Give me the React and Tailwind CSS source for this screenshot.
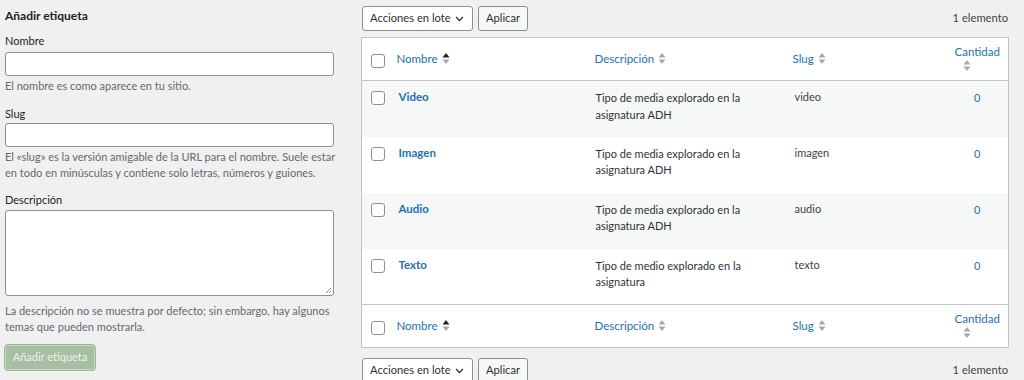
import React from "react";

const font = { fontFamily: 'Lato, "Noto Sans", Arial, sans-serif' };

function SortIcon({ active }) {
  return (
    <svg width="8" height="11" viewBox="0 0 8 11" className="inline-block ml-[4px] align-[-1px]">
      <path d="M4 0 L7.5 4.5 L0.5 4.5 Z" fill={active ? "#1d2327" : "#a7aaad"} />
      <path d="M0.5 6.5 L7.5 6.5 L4 11 Z" fill="#a7aaad" />
    </svg>
  );
}

function Checkbox({ block }) {
  return (
    <span
      className={
        (block ? "block " : "inline-block align-middle ") +
        "w-[14px] h-[14px] rounded-[3px] border border-[#8c8f94] bg-white"
      }
    />
  );
}

function Toolbar() {
  return (
    <div className="flex items-center h-[25px]">
      <div className="flex items-center justify-between whitespace-nowrap w-[111px] h-[25px] border border-[#8c8f94] rounded-[3px] bg-white pl-[7px] pr-[8px] text-[11.2px] text-[#2c3338]">
        <span>Acciones en lote</span>
        <svg width="9" height="6" viewBox="0 0 9 6"><path d="M1 1 L4.5 4.5 L8 1" fill="none" stroke="#2c3338" strokeWidth="1.3" /></svg>
      </div>
      <div className="ml-[5px] flex items-center justify-center w-[50px] h-[25px] border border-[#8c8f94] rounded-[3px] bg-[#f6f7f7] text-[11.2px] text-[#2c3338]">Aplicar</div>
      <div className="ml-auto text-[11.2px] text-[#3c434a]">1 elemento</div>
    </div>
  );
}

function HeaderRow({ bottom }) {
  return (
    <tr className={bottom ? "border-t border-[#c3c4c7]" : "border-b border-[#c3c4c7]"}>
      <td className="h-[43px] pl-[9px] align-middle"><Checkbox /></td>
      <td className="align-middle pl-0 text-[11.5px] text-[#2271b1]">Nombre<SortIcon active /></td>
      <td className="align-middle text-[11.5px] text-[#2271b1]">Descripción<SortIcon /></td>
      <td className="align-middle text-[11.5px] text-[#2271b1]">Slug<SortIcon /></td>
      <td className="align-middle text-[11.5px] text-[#2271b1] pl-[8px] leading-[14px]">
        <div>Cantidad</div>
        <div className="pl-[4px]"><SortIcon /></div>
      </td>
    </tr>
  );
}

const rows = [
  { name: "Video", desc: ["Tipo de media explorado en la", "asignatura ADH"], slug: "video" },
  { name: "Imagen", desc: ["Tipo de media explorado en la", "asignatura ADH"], slug: "imagen" },
  { name: "Audio", desc: ["Tipo de media explorado en la", "asignatura ADH"], slug: "audio" },
  { name: "Texto", desc: ["Tipo de medio explorado en la", "asignatura"], slug: "texto" },
];

export default function App() {
  return (
    <div style={font} className="w-[1024px] h-[380px] overflow-hidden bg-[#f0f0f1] flex text-[#3c434a]">
      <div className="w-[361px] shrink-0 pl-[5px] pr-[26px]">
        <div className="mt-[7px] text-[12px] font-bold text-[#1d2327] leading-[18px]">Añadir etiqueta</div>
        <div className="mt-[8px] text-[11px] text-[#1d2327] leading-[16px]">Nombre</div>
        <div className="mt-[3px] h-[24px] w-[329px] bg-white border border-[#8c8f94] rounded-[3px]" />
        <div className="mt-[2px] text-[11px] text-[#646970] leading-[16px]">El nombre es como aparece en tu sitio.</div>
        <div className="mt-[12px] text-[11px] text-[#1d2327] leading-[16px]">Slug</div>
        <div className="mt-[1px] h-[24px] w-[329px] bg-white border border-[#8c8f94] rounded-[3px]" />
        <div className="mt-[2px] text-[11px] text-[#646970] leading-[16px]">
          El «slug» es la versión amigable de la URL para el nombre. Suele estar en todo en minúsculas y contiene solo letras, números y guiones.
        </div>
        <div className="mt-[11px] text-[11px] text-[#1d2327] leading-[16px]">Descripción</div>
        <div className="relative mt-[2px] h-[86px] w-[329px] bg-white border border-[#8c8f94] rounded-[3px]">
          <svg className="absolute right-[1px] bottom-[1px]" width="7" height="7" viewBox="0 0 7 7">
            <path d="M6 1 L1 6 M6 4 L4 6" stroke="#8c8f94" strokeWidth="1" />
          </svg>
        </div>
        <div className="mt-[7px] text-[11px] text-[#646970] leading-[16px]">
          La descripción no se muestra por defecto; sin embargo, hay algunos temas que pueden mostrarla.
        </div>
        <div className="mt-[9px] ml-[-1px] inline-flex items-center justify-center w-[92px] h-[27px] rounded-[4px] border border-[#9fb899] bg-[#a7bfa2] shadow-[inset_0_0_0_1px_#c9d8c5] text-[11px] text-[#eef3ec]">
          Añadir etiqueta
        </div>
      </div>

      <div className="w-[647px] shrink-0 pt-[6px]">
        <div className="pl-[1px]"><Toolbar /></div>
        <table className="mt-[6px] w-[647px] table-fixed border-collapse border border-[#c3c4c7] bg-white">
          <colgroup>
            <col className="w-[35px]" />
            <col className="w-[198px]" />
            <col className="w-[198px]" />
            <col className="w-[154px]" />
            <col className="w-[62px]" />
          </colgroup>
          <thead>
            <HeaderRow />
          </thead>
          <tbody>
            {rows.map((r, i) => (
              <tr key={r.name} className={i % 2 === 0 ? "bg-[#f6f7f7]" : "bg-white"}>
                <td className="h-[56px] pl-[9px] align-top pt-[10px]"><Checkbox block /></td>
                <td className="align-top pt-[8px] pl-[2px] text-[11.5px] font-bold text-[#2271b1] leading-[16px]">{r.name}</td>
                <td className="align-top pt-[9px] pl-[1px] text-[11px] text-[#2c3338] leading-[16.5px]">
                  <div>{r.desc[0]}</div>
                  <div>{r.desc[1]}</div>
                </td>
                <td className="align-top pt-[8px] pl-[2px] text-[11px] text-[#3c434a] leading-[16px]">{r.slug}</td>
                <td className="align-top pt-[9px] text-center text-[11px] text-[#2271b1] leading-[16px]">0</td>
              </tr>
            ))}
          </tbody>
          <tfoot>
            <HeaderRow bottom />
          </tfoot>
        </table>
        <div className="mt-[10px] pl-[1px]"><Toolbar /></div>
      </div>
    </div>
  );
}
